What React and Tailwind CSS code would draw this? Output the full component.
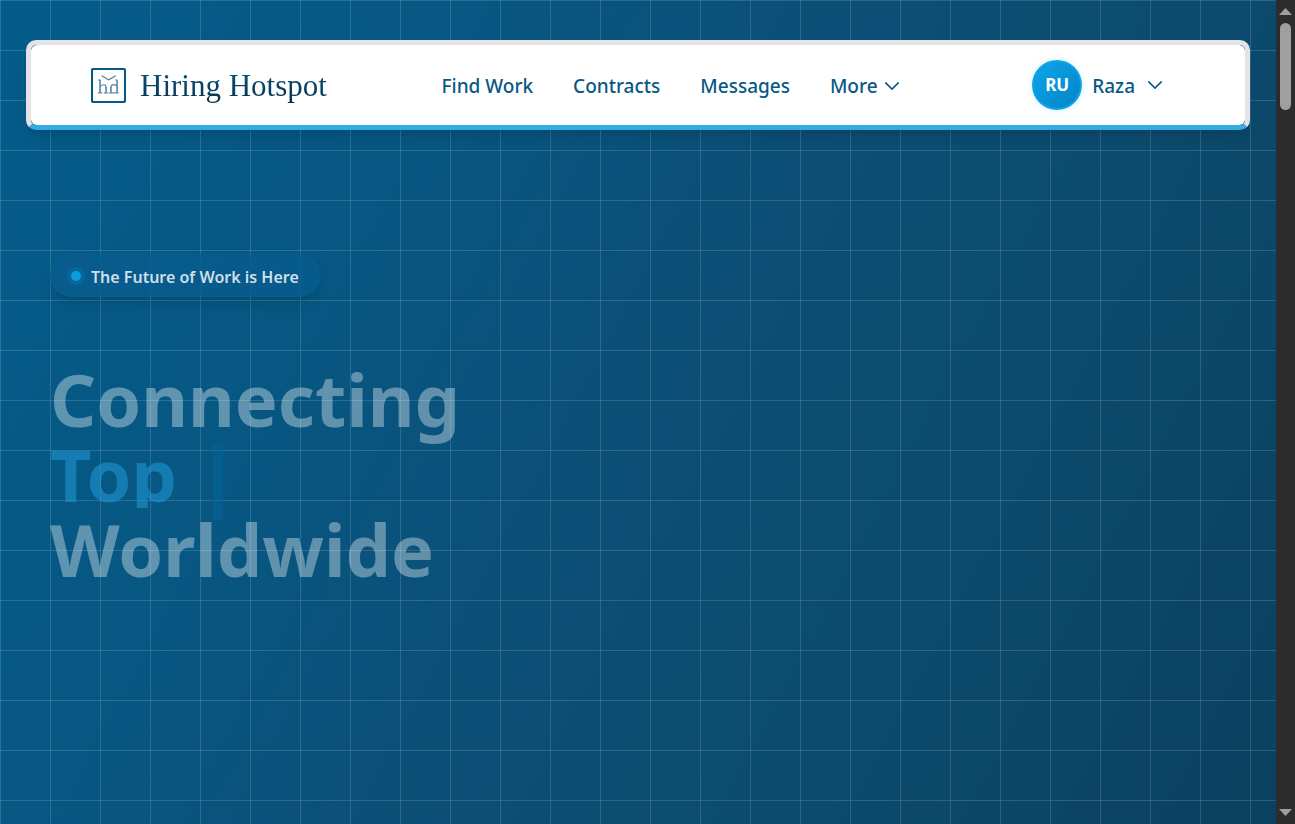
const links = ["Find Work", "Contracts", "Messages"];

function LogoMark() {
  return (
    <svg width="35" height="35" viewBox="0 0 36 36" fill="none" aria-hidden="true">
      <rect x="1" y="1" width="34" height="34" rx="1.5" stroke="#075985" strokeWidth="2.2" />
      <path d="M11 8l7.2 4.2L25.5 8" stroke="#4f819b" strokeWidth="1.2" />
      <g stroke="#5b8ba3">
        <path strokeWidth="1.7" d="M9.3 12v13.5M15.5 25.5v-6M20.5 25.5v-6M26.8 12v13.5" />
        <path strokeWidth="1.2" d="M9.3 19.5c1.5-2.9 6.2-3.3 6.2.5M20.5 20c0-3.8 4.6-3.8 6.3-.8M7.2 12.3h2.1M7 25.5h4.6M13.2 25.5h4.6M18.7 25.5h3.4M25 12.3h2M22 25.5h6.5" />
      </g>
    </svg>
  );
}

function Chevron() {
  return (
    <svg width="20" height="20" viewBox="0 0 24 24" fill="none" stroke="currentColor" strokeWidth="1.8" strokeLinecap="round" strokeLinejoin="round" aria-hidden="true">
      <path d="M19.5 8.25l-7.5 7.5-7.5-7.5" />
    </svg>
  );
}

function Header() {
  return (
    <header className="mx-[26px] mt-10 flex h-[90px] items-center rounded-[10px] border-5 border-[#e4e4e8] border-b-[#33ace4] bg-[#0c4a6e] shadow-lg">
      <div className="flex h-20 w-full items-center justify-between rounded-md bg-white pr-20 pl-[60px]">
        <a href="#home" className="flex items-center gap-[14px]">
          <LogoMark />
          <span className="bg-linear-to-b from-[#075985] to-[#082f49] bg-clip-text pt-0.5 font-['Liberation_Serif',serif] text-[31px] leading-10 text-transparent">
            Hiring Hotspot
          </span>
        </a>
        <nav className="mr-4 flex items-center gap-10 pt-0.5 text-[19px] font-medium text-[#075985]">
          {links.map((l) => (
            <a key={l} href="#nav">{l}</a>
          ))}
          <button className="flex items-center gap-1">
            More
            <Chevron />
          </button>
        </nav>
        <button className="flex items-center gap-2.5 text-[19px] font-medium text-[#075985]">
          <span className="flex size-[50px] items-center justify-center rounded-full border-2 border-[#0ea5e9] bg-linear-to-br from-[#0ea5e9] to-[#0284c7] text-[17px] font-bold text-white shadow-[0_0_8px_rgba(14,165,233,0.15)]">
            RU
          </span>
          <span className="pt-0.5">Raza</span>
          <Chevron />
        </button>
      </div>
    </header>
  );
}

function Hero() {
  return (
    <main className="flex flex-col items-start px-[50px] pt-[124px]">
      <p className="flex h-[43px] items-center gap-[10px] rounded-full border border-[#0369a1]/30 bg-[#075d8e]/80 px-5 text-base font-semibold text-[#cfdfe9] shadow-lg">
        <span className="size-[10px] rounded-full bg-[#0e9ce0] ring-4 ring-[#0ea5e9]/15" />
        <span className="pt-0.5">The Future of Work is Here</span>
      </p>
      <h1 className="mt-[65px] text-[72px] leading-[75px] font-bold text-white/36">
        <span className="block">Connecting</span>
        <span className="flex h-[75px] items-start text-[#219bd9]/55">
          <span className="h-[71px] overflow-hidden">Top</span>
          <span className="mt-2 ml-9 h-[75px] w-[10px] bg-[#0369a1]/40" />
        </span>
        <span className="block">Worldwide</span>
      </h1>
    </main>
  );
}

function Scrollbar() {
  return (
    <div className="flex w-[19px] flex-col items-center bg-[#2c2c2c] py-2" aria-hidden="true">
      <svg width="13" height="7" viewBox="0 0 13 7"><path d="M0 7L6.5 0L13 7z" fill="#9f9f9f" /></svg>
      <span className="mt-2 h-[87px] w-[11px] rounded-full bg-[#9f9f9f]" />
      <svg className="mt-auto" width="13" height="7" viewBox="0 0 13 7"><path d="M0 0L6.5 7L13 0z" fill="#9f9f9f" /></svg>
    </div>
  );
}

export default function App() {
  return (
    <div className="flex min-h-screen font-['Noto_Sans',sans-serif]">
      <div className="flex-1 bg-[linear-gradient(118deg,#055c8a_0%,#075782_28%,#0c4e75_52%,#0c4b6e_72%,#0b4060_100%)]">
        <div className="flow-root min-h-screen bg-[linear-gradient(to_right,rgba(255,255,255,0.14)_1px,transparent_1px),linear-gradient(to_bottom,rgba(255,255,255,0.14)_1px,transparent_1px)] bg-size-[50px_50px]">
          <Header />
          <Hero />
        </div>
      </div>
      <Scrollbar />
    </div>
  );
}
